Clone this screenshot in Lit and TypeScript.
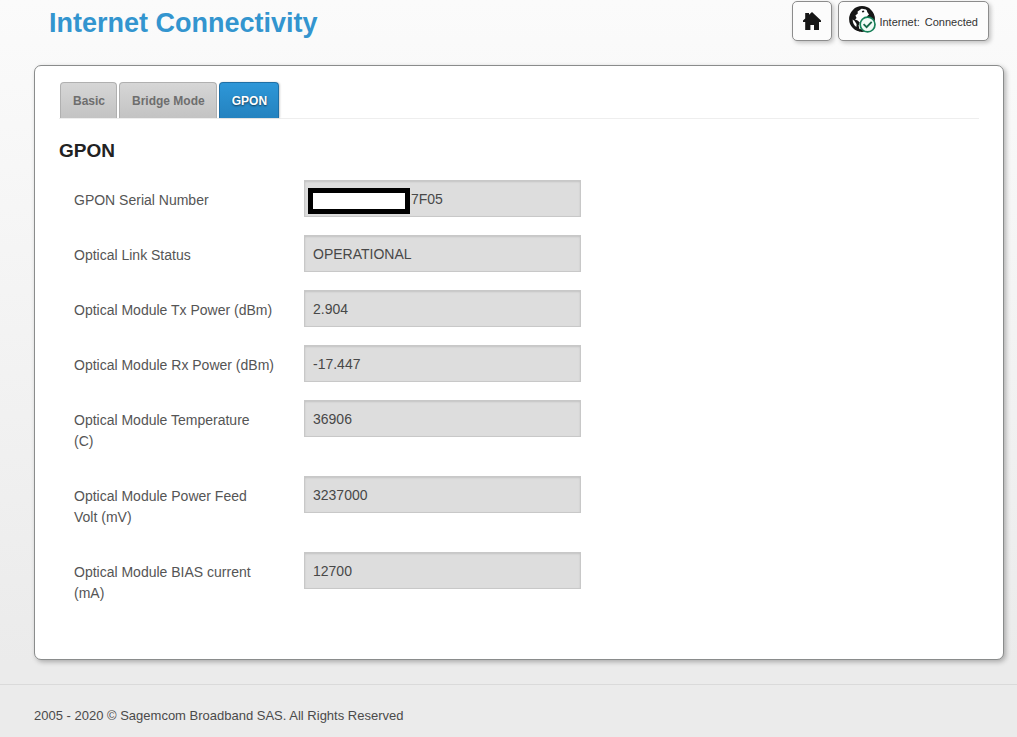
import { LitElement, html, css } from "lit";
import { customElement, state } from "lit/decorators.js";
import { classMap } from "lit/directives/class-map.js";

interface Field {
  id: string;
  label: string;
  value: string;
  masked?: boolean;
}

const TABS = ["Basic", "Bridge Mode", "GPON"];

const FIELDS: Field[] = [
  { id: "serial", label: "GPON Serial Number", value: "7F05", masked: true },
  { id: "link", label: "Optical Link Status", value: "OPERATIONAL" },
  { id: "tx", label: "Optical Module Tx Power (dBm)", value: "2.904" },
  { id: "rx", label: "Optical Module Rx Power (dBm)", value: "-17.447" },
  { id: "temp", label: "Optical Module Temperature\n(C)", value: "36906" },
  { id: "volt", label: "Optical Module Power Feed\nVolt (mV)", value: "3237000" },
  { id: "bias", label: "Optical Module BIAS current\n(mA)", value: "12700" },
];

@customElement("app-root")
export class AppRoot extends LitElement {
  @state() private active = "GPON";

  static styles = css`
    :host {
      display: flex;
      flex-direction: column;
      box-sizing: border-box;
      min-height: 100vh;
      font-family: "Liberation Sans", Arial, sans-serif;
      font-size: 14px;
      line-height: 21px;
      color: #555;
      background: linear-gradient(#fbfbfb, #ebebeb 90%);
    }
    * {
      box-sizing: border-box;
    }
    .top {
      display: flex;
      justify-content: space-between;
      align-items: flex-start;
      padding: 1px 28px 0 49px;
      height: 65px;
    }
    .title {
      margin: 0;
      padding-top: 4px;
      font-size: 27px;
      line-height: 36px;
      color: #3395cf;
    }
    .tools {
      display: flex;
      gap: 6px;
    }
    .tool {
      display: flex;
      align-items: center;
      justify-content: center;
      height: 40px;
      margin: 0;
      padding: 2px 10px 0;
      font: inherit;
      font-size: 11px;
      color: #333;
      background: #fcfcfc;
      border: 1px solid #8c8c8c;
      border-radius: 5px;
      box-shadow: 2px 2px 4px rgba(0, 0, 0, 0.22);
    }
    .home {
      width: 40px;
      padding: 0;
    }
    .globe {
      margin: 0 3px 6px 0;
    }
    .state {
      margin-left: 5px;
    }
    .card {
      margin: 0 13px 0 34px;
      padding: 16px 24px 31px;
      background: #fff;
      border: 1px solid #8a8c8c;
      border-radius: 7px;
      box-shadow: 2px 2px 5px rgba(0, 0, 0, 0.28);
    }
    .tabs {
      display: flex;
      gap: 2px;
      padding-left: 1px;
      border-bottom: 1px solid #eee;
    }
    .tab {
      height: 36px;
      margin: 0;
      padding: 1px 11px 0 12px;
      font: inherit;
      font-size: 12px;
      font-weight: bold;
      color: #6e6e6e;
      background: linear-gradient(#d6d6d6, #c3c3c3);
      border: 1px solid #b0b0b0;
      border-bottom: 0;
      border-radius: 4px 4px 0 0;
    }
    .tab.active {
      color: #fff;
      background: linear-gradient(#2e97d8, #2482bf);
      border-color: #1f6fa5;
      text-shadow: 0 1px 2px rgba(0, 0, 0, 0.6);
      box-shadow: 1px 0 2px rgba(0, 0, 0, 0.2);
    }
    .heading {
      margin: 20px 0 17px;
      font-size: 19px;
      line-height: 24px;
      color: #222;
    }
    .row {
      display: grid;
      grid-template-columns: 200px minmax(0, 277px);
      column-gap: 30px;
      align-items: start;
      padding: 0 0 18px 15px;
    }
    .label {
      padding: 10px 0 6px;
      white-space: pre-line;
    }
    .field {
      position: relative;
    }
    .value {
      display: block;
      width: 100%;
      height: 37px;
      margin: 0;
      padding: 0 8px;
      font: inherit;
      color: #484848;
      background: #ddd;
      border: 1px solid #c8c8c8;
      border-radius: 0;
      box-shadow: inset 0 1px 2px rgba(0, 0, 0, 0.12);
      outline: none;
    }
    .value.masked {
      padding-left: 106px;
    }
    .mask {
      position: absolute;
      top: 8px;
      left: 4px;
      width: 102px;
      height: 26px;
      background: #fff;
      border: 5px solid #000;
    }
    .footer {
      flex: 1;
      margin-top: 24px;
      padding: 20px 34px 10px;
      font-size: 13px;
      color: #4a4a4a;
      border-top: 1px solid #dadada;
    }
  `;

  render() {
    return html`
      <header class="top">
        <h1 class="title">Internet Connectivity</h1>
        <div class="tools">
          <button class="tool home" type="button" aria-label="Home">
            <svg width="20" height="20" viewBox="0 0 20 20" fill="#161616">
              <path d="M10 1 L19 9.6 V11 H17 V19 H12 V14 H8.4 V19 H3.2 V11 H1 V9.6 L3.2 7.4 V2 H7 V3.8 Z" />
            </svg>
          </button>
          <button class="tool" type="button">
            <svg class="globe" width="27" height="27" viewBox="0 0 27 27" aria-hidden="true">
              <circle cx="13" cy="13" r="11.6" fill="#fff" stroke="#161616" stroke-width="2.6" />
              <path fill="#161616" d="M12 1 L11.6 3.4 L8.6 5.4 L8.8 7.4 L6.4 9.6 L7.6 12 L6 13.4 L8.6 14.4 L10.8 16.6 L9.6 19.4 L11 25.4 C5 24 1 19 1 13 C1 7 6 1.3 12 1 Z" />
              <path fill="#fff" d="M3.6 13.5 L5.4 14.8 L7.6 18 L7.4 21 C5.2 19.4 3.7 17 3.6 13.5 Z" />
              <path fill="#161616" d="M17 2 L21 4 L25 9 L25.4 14 L21 11.6 L18.6 12.2 L18 10.2 L20 8.6 L18.4 6.2 Z M12.8 5 L14.8 4.4 L15.4 6 L13.4 6.6 Z" />
              <circle cx="18.6" cy="18.5" r="7.4" fill="#f1fbf6" stroke="#168058" stroke-width="1.7" />
              <path d="M14.6 18.2 L17.6 21.2 L22.7 15.8" fill="none" stroke="#146848" stroke-width="1.8" />
            </svg>
            <span>Internet:</span><span class="state">Connected</span>
          </button>
        </div>
      </header>
      <main class="card">
        <div class="tabs" role="tablist">
          ${TABS.map(
            (t) => html`<button
              type="button"
              role="tab"
              aria-selected=${t === this.active ? "true" : "false"}
              class=${classMap({ tab: true, active: t === this.active })}
              @click=${() => (this.active = t)}
            >${t}</button>`
          )}
        </div>
        <h2 class="heading">GPON</h2>
        ${FIELDS.map(
          (f) => html`<div class="row">
            <label class="label" for=${f.id}>${f.label}</label>
            <div class="field">
              <input
                id=${f.id}
                class=${classMap({ value: true, masked: !!f.masked })}
                type="text"
                readonly
                .value=${f.value}
              />
              ${f.masked ? html`<span class="mask"></span>` : ""}
            </div>
          </div>`
        )}
      </main>
      <footer class="footer">2005 - 2020 © Sagemcom Broadband SAS. All Rights Reserved</footer>
    `;
  }
}
